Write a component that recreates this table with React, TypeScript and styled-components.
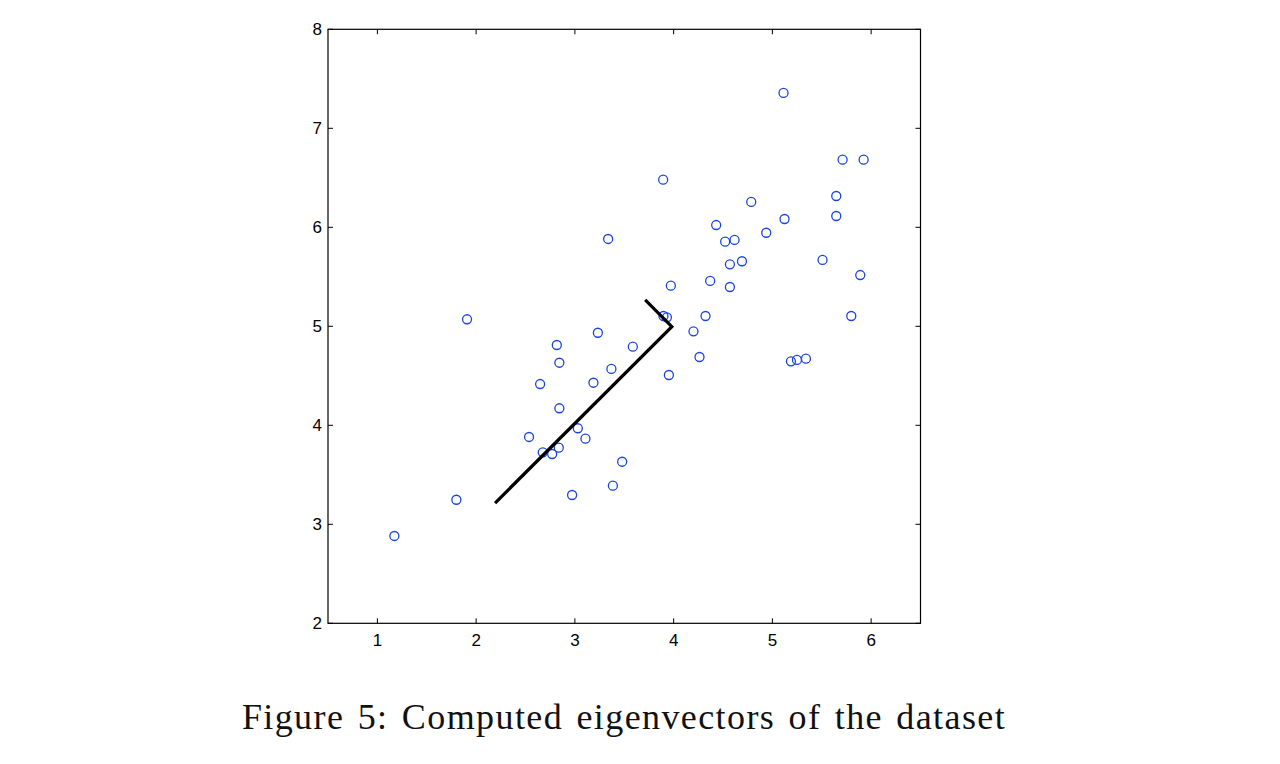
import styled, { createGlobalStyle } from "styled-components";

const GlobalStyle = createGlobalStyle`
  html, body {
    margin: 0;
    padding: 0;
    background: #ffffff;
  }
`;

const Page = styled.div`
  width: 1248px;
  height: 764px;
  display: flex;
  flex-direction: column;
  align-items: center;
  padding-top: 15px;
  box-sizing: border-box;
  background: #ffffff;
`;

const Chart = styled.svg`
  display: block;
  width: 650px;
  height: 645px;
`;

const TickLabel = styled.text`
  font-family: "Liberation Sans", Arial, sans-serif;
  font-size: 17px;
  fill: #000000;
`;

const Caption = styled.div`
  margin-top: 37px;
  font-family: "Liberation Serif", "Times New Roman", serif;
  font-size: 36px;
  line-height: 40px;
  letter-spacing: 1.4px;
  word-spacing: 3px;
  color: #111111;
  white-space: nowrap;
`;

// axes box in page pixels
const LEFT = 328;
const RIGHT = 920.5;
const TOP = 29.3;
const BOTTOM = 623.3;
const X_MIN = 0.5;
const X_MAX = 6.5;
const Y_MIN = 2;
const Y_MAX = 8;

const sx = (x: number) => LEFT + ((x - X_MIN) / (X_MAX - X_MIN)) * (RIGHT - LEFT);
const sy = (y: number) => BOTTOM - ((y - Y_MIN) / (Y_MAX - Y_MIN)) * (BOTTOM - TOP);

const points: [number, number][] = [
  [1.172, 2.882], [1.8, 3.248], [1.908, 5.071], [2.536, 3.882], [2.648, 4.417],
  [2.675, 3.727], [2.77, 3.71], [2.837, 3.774], [2.817, 4.811], [2.843, 4.632],
  [2.843, 4.172], [2.972, 3.296], [3.03, 3.97], [3.107, 3.865], [3.188, 4.43],
  [3.233, 4.935], [3.37, 4.569], [3.337, 5.882], [3.385, 3.39], [3.479, 3.632],
  [3.587, 4.794], [3.894, 6.481], [3.897, 5.104], [3.932, 5.091], [3.952, 4.508],
  [3.972, 5.41], [4.201, 4.949], [4.262, 4.69], [4.323, 5.104], [4.37, 5.458],
  [4.431, 6.023], [4.522, 5.855], [4.617, 5.872], [4.57, 5.626], [4.692, 5.657],
  [4.57, 5.397], [4.786, 6.256], [4.938, 5.945], [5.113, 7.357], [5.123, 6.084],
  [5.188, 4.646], [5.249, 4.66], [5.34, 4.673], [5.508, 5.67], [5.647, 6.316],
  [5.647, 6.114], [5.711, 6.683], [5.799, 5.104], [5.89, 5.518], [5.924, 6.683],
];

const eigen: [number, number][] = [
  [2.192, 3.215],
  [3.982, 4.996],
  [3.712, 5.268],
];

const xTicks = [1, 2, 3, 4, 5, 6];
const yTicks = [2, 3, 4, 5, 6, 7, 8];
const TICK = 5;

function ScatterPlot() {
  return (
    <Chart viewBox="299 15 650 645">
      <rect
        x={LEFT}
        y={TOP}
        width={RIGHT - LEFT}
        height={BOTTOM - TOP}
        fill="none"
        stroke="#000"
        strokeWidth={1.2}
      />
      {xTicks.map((t) => (
        <g key={"x" + t}>
          <line x1={sx(t)} x2={sx(t)} y1={BOTTOM} y2={BOTTOM - TICK} stroke="#000" strokeWidth={1} />
          <line x1={sx(t)} x2={sx(t)} y1={TOP} y2={TOP + TICK} stroke="#000" strokeWidth={1} />
          <TickLabel x={sx(t)} y={BOTTOM + 23} textAnchor="middle">
            {t}
          </TickLabel>
        </g>
      ))}
      {yTicks.map((t) => (
        <g key={"y" + t}>
          <line x1={LEFT} x2={LEFT + TICK} y1={sy(t)} y2={sy(t)} stroke="#000" strokeWidth={1} />
          <line x1={RIGHT} x2={RIGHT - TICK} y1={sy(t)} y2={sy(t)} stroke="#000" strokeWidth={1} />
          <TickLabel x={LEFT - 6} y={sy(t) + 6} textAnchor="end">
            {t}
          </TickLabel>
        </g>
      ))}
      {points.map(([x, y], i) => (
        <circle key={i} cx={sx(x)} cy={sy(y)} r={4.5} fill="none" stroke="#1a44e0" strokeWidth={1.3} />
      ))}
      <polyline
        points={eigen.map(([x, y]) => `${sx(x)},${sy(y)}`).join(" ")}
        fill="none"
        stroke="#000"
        strokeWidth={3.2}
      />
    </Chart>
  );
}

export default function App() {
  return (
    <>
      <GlobalStyle />
      <Page>
        <ScatterPlot />
        <Caption>Figure 5: Computed eigenvectors of the dataset</Caption>
      </Page>
    </>
  );
}
